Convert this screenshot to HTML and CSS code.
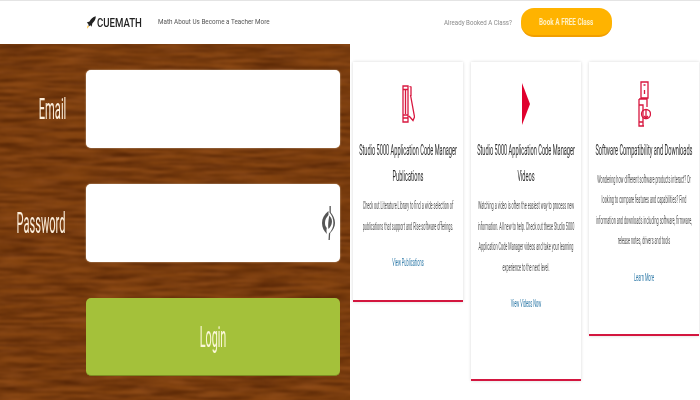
FILE: index.html
```html
<!DOCTYPE html>
<html lang="en">
<head>
<meta charset="utf-8">
<title>Cuemath</title>
<link rel="stylesheet" href="styles.css">
</head>
<body>
<div class="topnav">
  <div class="brand">
    <svg class="rocket" width="10" height="13" viewBox="0 0 10 13"><path d="M9.800.3C6.800 1.200 4.800 3 3.500 5.500L.8 6.600l1.500 1.300.5 2.600 1.600-1.300 1.200 1.500.8-3.500C8.500 5.500 9.700 3.400 9.800.3z" fill="#222"/><path d="M1.700 9.600 2.900 10.600 1 12.800z" fill="#fdb515"/></svg>
    <span class="wordmark">CUEMATH</span>
  </div>
  <span class="links">Math About Us Become a Teacher More</span>
  <span class="booked">Already Booked A Class?</span>
  <span class="book"><span class="book-text">Book A FREE Class</span></span>
</div>
<div class="main">
  <section class="wood">
    <svg class="grain" width="358" height="364" aria-hidden="true">
      <defs>
        <filter id="darkgrain" x="0" y="0" width="100%" height="100%" color-interpolation-filters="sRGB">
          <feTurbulence type="fractalNoise" baseFrequency="0.02 0.3" numOctaves="4" seed="7"/>
          <feColorMatrix type="matrix" values="0 0 0 0 0.3  0 0 0 0 0.12  0 0 0 0 0.01  1.800 0 0 0 -0.6"/>
        </filter>
        <filter id="lightgrain" x="0" y="0" width="100%" height="100%" color-interpolation-filters="sRGB">
          <feTurbulence type="fractalNoise" baseFrequency="0.03 0.35" numOctaves="3" seed="23"/>
          <feColorMatrix type="matrix" values="0 0 0 0 0.62  0 0 0 0 0.34  0 0 0 0 0.14  0 1.200 0 0 -0.52"/>
        </filter>
      </defs>
      <rect width="358" height="364" fill="#84430f"/>
      <rect width="358" height="364" filter="url(#darkgrain)"/>
      <rect width="358" height="364" filter="url(#lightgrain)"/>
    </svg>
    <form class="login">
      <span class="label">Email</span>
      <div class="field"></div>
      <span class="label">Password</span>
      <div class="field">
        <svg class="eye" width="14" height="36" viewBox="0 0 14 36"><path d="M7.500 6C3 9.500 1 13.500 1 18s2 8.500 5 11c-.6-2.500-.6-4.500-.2-6-1.300-1.500-1.800-3-1.800-5 0-3 1.200-5.500 3.500-8z" fill="#555"/><path d="M8.500 1v6.500C11 10 12.400 14 12.400 18c0 4.500-2 8-4.500 10.500L7.500 35l1.300-.1.400-7c3-2.800 4.800-6.300 4.800-9.900 0-4-1.900-7.700-4.200-10.400V1z" fill="#555"/><path d="M8.300 10.500c2.500 2.500 3 5 2.500 7.500-.4 2.200-1.700 4.500-3.300 6-.8-2.500 0-9.500.8-13.500z" fill="#555"/></svg>
      </div>
      <span></span>
      <div class="submit"><span class="submit-text">Login</span></div>
    </form>
  </section>
  <section class="cards">
    <article class="card card-a">
      <svg class="icon" width="13" height="38" viewBox="0 0 13 38" fill="none" stroke="#d8173f" stroke-width="1.300"><path d="M1 1h5v36H1zM1 4.500h5M1 30h5M1 33h5M3.500 5v24M7.500 1.500l1.500.5v9M8.500 10l4 22-1.500 3.500L7 31"/></svg>
      <h2 class="title"><span>Studio 5000 Application Code Manager</span><span>Publications</span></h2>
      <p class="copy"><span>Check out Literature Library to find a wide selection of</span><span>publications that support and Rise software offerings.</span></p>
      <a class="more">View Publications</a>
    </article>
    <article class="card card-b">
      <svg class="icon" width="10" height="42" viewBox="0 0 10 42"><path d="M1 0 9 21 1 42z" fill="#e0002d"/></svg>
      <h2 class="title"><span>Studio 5000 Application Code Manager</span><span>Videos</span></h2>
      <p class="copy"><span>Watching a video is often the easiest way to process new</span><span>information. All new to help. Check out these Studio 5000</span><span>Application Code Manager videos and take your learning</span><span>experience to the next level.</span></p>
      <a class="more">View Videos Now</a>
    </article>
    <article class="card card-c">
      <svg class="icon" width="13" height="46" viewBox="0 0 13 46" fill="none" stroke="#d8173f" stroke-width="1.300"><path d="M3 1h7v16H3zM5.500 4h2M6.500 9v4M1 18h8v8M1 18v27h5M1 24h4v21M1 41h4"/><circle cx="8" cy="33" r="4.500"/><path d="M8 28v10M6 35l2 2.500 2-2.500"/></svg>
      <h2 class="title"><span>Software Compatibility and Downloads</span></h2>
      <p class="copy"><span>Wondering how different software products interact? Or</span><span>looking to compare features and capabilities? Find</span><span>information and downloads including software, firmware,</span><span>release notes, drivers and tools</span></p>
      <a class="more">Learn More</a>
    </article>
  </section>
</div>
</body>
</html>
```

FILE: styles.css
```css
* { box-sizing: border-box; }
html, body { margin: 0; height: 400px; overflow: hidden; background: #fff; font-family: "Roboto", "Liberation Sans", sans-serif; }

.topnav {
  height: 44px;
  border-top: 1px solid #e4e4e4;
  display: flex;
  align-items: center;
  padding-left: 86px;
}
.brand { display: flex; align-items: center; gap: 1px; width: 72px; flex: none; }
.wordmark { font: 500 12px "Roboto", sans-serif; color: #222; transform: scaleX(.8); transform-origin: left; }
.links { width: 286px; flex: none; font-size: 8px; color: #555; white-space: nowrap; filter: blur(.3px); transform: scaleX(.79); transform-origin: left; position: relative; top: -1px; }
.booked { width: 77px; flex: none; font-size: 8px; color: #8a8a8a; white-space: nowrap; filter: blur(.3px); transform: scaleX(.77); transform-origin: left; }
.book {
  width: 91px; height: 29px; flex: none;
  border-radius: 13px;
  background: #ffb300;
  border-bottom: 2px solid #f19f00;
  display: flex; align-items: center; justify-content: center;
}
.book-text { color: #fff0c2; font-size: 8.500px; font-weight: 700; white-space: nowrap; transform: scaleX(.75); filter: blur(.2px); }

.main { display: flex; height: 356px; }
.wood { width: 350px; position: relative; flex: none; overflow: hidden; }
.grain { position: absolute; left: -4px; top: -4px; filter: blur(1px); }
.login {
  position: relative;
  display: grid;
  grid-template-columns: 66px 254px;
  grid-auto-rows: 78px;
  column-gap: 20px;
  row-gap: 36px;
  padding-top: 26px;
}
.label {
  align-self: center;
  justify-self: end;
  color: #fbeedb;
  font-size: 30px;
  line-height: 34px;
  white-space: nowrap;
  transform: scaleX(.37);
  transform-origin: right;
  filter: blur(.4px);
}
.field {
  background: #fff;
  border-radius: 5px;
  box-shadow: 0 0 1.500px #f3e2cd;
  display: flex; align-items: center; justify-content: flex-end;
  padding-right: 5px;
}
.eye { filter: blur(.4px); }
.submit {
  background: #a4c13a;
  border-radius: 5px;
  border-bottom: 1px solid #7d8d22;
  display: flex; align-items: center; justify-content: center;
}
.submit-text { color: #fbf7d8; font-size: 30px; transform: scaleX(.36); filter: blur(.4px); }

.cards {
  flex: 1;
  display: flex;
  align-items: flex-start;
  gap: 8px;
  padding: 18px 1px 0 3px;
}
.card {
  width: 110px;
  flex: none;
  padding-top: 23px;
  background: #fff;
  border-bottom: 2.500px solid #d3163f;
  box-shadow: 0 0 3px rgba(0,0,0,.16);
  text-align: center;
  display: flex; flex-direction: column;
}
.card-a { height: 240px; }
.card-b { height: 319px; padding-top: 21px; }
.card-c { height: 274px; padding-top: 19px; }
.card-a .title { margin-top: 15px; }
.card-b .title { margin-top: 13px; }
.icon { flex: none; display: block; margin: 0 auto; filter: blur(.3px); }
.title, .copy { margin: 0; width: 100%; font-weight: 400; }
.title span, .copy span, .more {
  display: block;
  width: 400%;
  margin-left: -150%;
  white-space: nowrap;
  text-align: center;
  filter: blur(.45px);
}
.title span {
  font-size: 15px; line-height: 25.500px; color: #2a2a2a;
  transform: scaleX(.375);
}
.copy { margin-top: 7px; }
.copy span {
  font-size: 10px; line-height: 20.500px; color: #555;
  transform: scaleX(.38);
}
.more {
  margin-top: 18px;
  font-size: 11px; line-height: 16px; color: #2f7aa8;
  transform: scaleX(.36);
}
.card-c .title { margin-top: 11px; }
.card-c .copy { margin-top: 6px; }
.card-c .more { margin-top: 18px; }
```
